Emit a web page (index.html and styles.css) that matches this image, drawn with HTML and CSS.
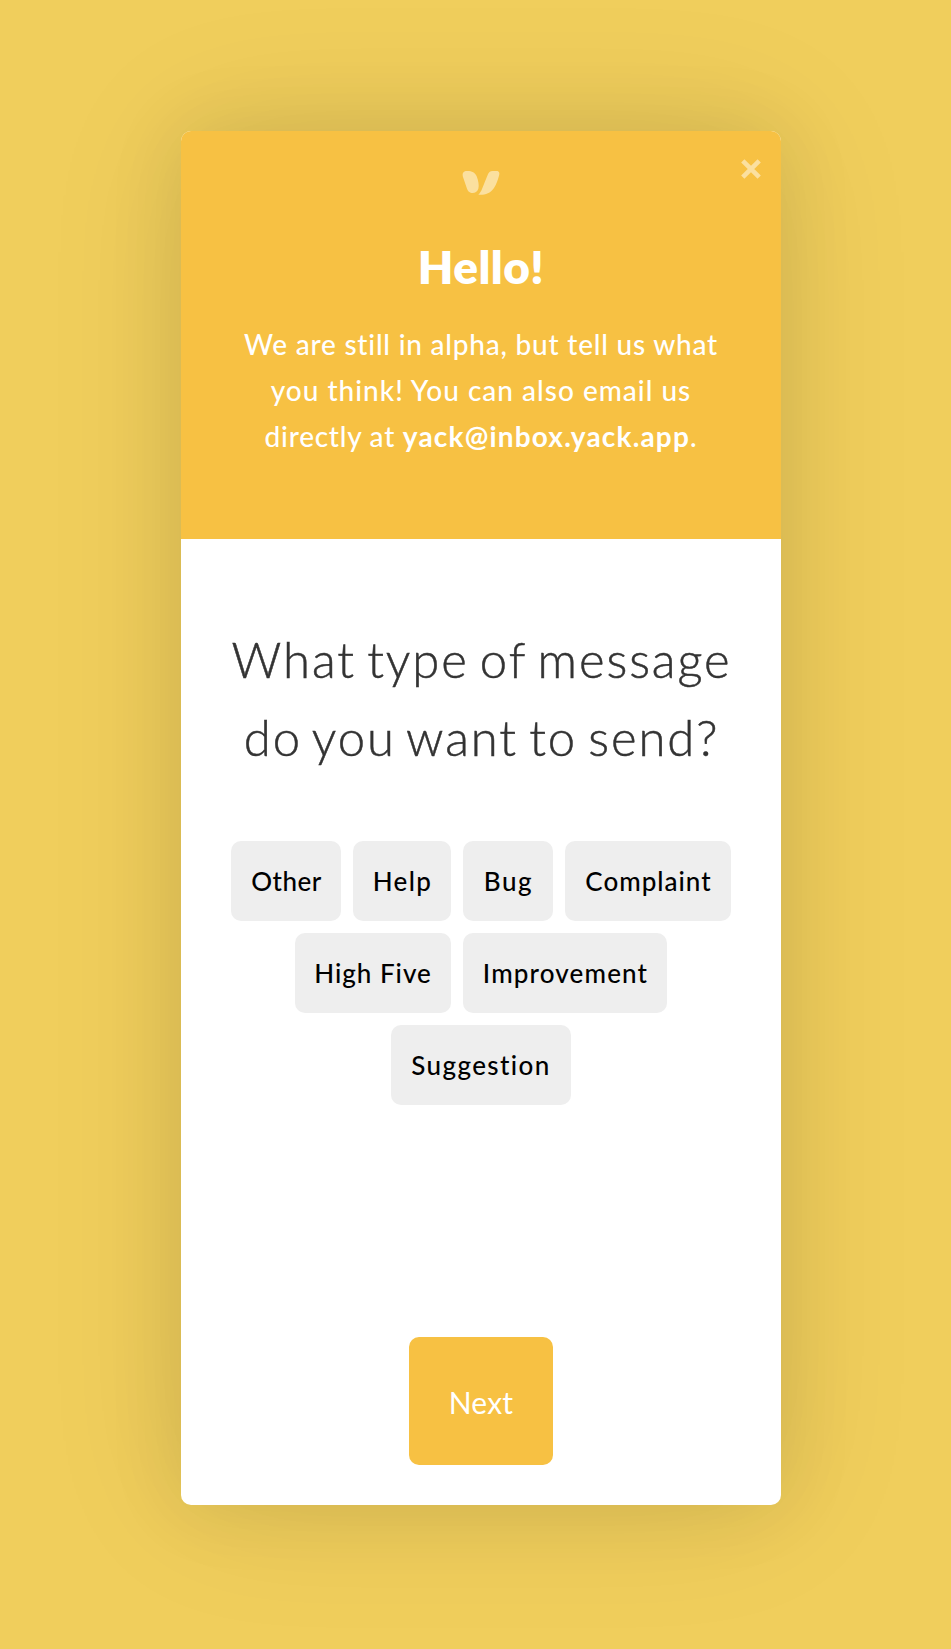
FILE: index.html
```html
<!DOCTYPE html>
<html lang="en">
<head>
<meta charset="utf-8">
<title>Feedback</title>
<link rel="stylesheet" href="styles.css">
</head>
<body>
<main class="card">
  <header class="card-header">
    <button class="close" aria-label="Close">
      <svg width="20" height="20" viewBox="0 0 20 20"><path d="M1.8 1.8L18.2 18.2M18.2 1.8L1.8 18.2" stroke="#fbe09f" stroke-width="4.6"/></svg>
    </button>
    <svg class="logo" width="38" height="26" viewBox="36 30 114 78" fill="#fbe09f">
      <path d="M48 33C64 32 75 36 80 49C85 62 88 77 85 86C81 98 71 100 62 98C56 96 53 91 51 86L39 51C36 42 39 34 48 33Z"/>
      <path d="M85 104C90 99 93 94 96 87L112 47C116 37 120 33 128 33L139 33C147 33 150 39 147 47C143 60 140 72 132 84C120 101 105 105 85 104Z"/>
    </svg>
    <h1 class="hello">Hello!</h1>
    <p class="intro">
      <span class="line l1">We are still in alpha, but tell us what</span>
      <span class="line l2">you think! You can also email us</span>
      <span class="line l3">directly at <b class="email">yack@inbox.yack.app</b>.</span>
    </p>
  </header>
  <section class="card-body">
    <h2 class="question">
      <span class="line">What type of message</span>
      <span class="line">do you want to send?</span>
    </h2>
    <div class="chips">
      <button class="chip other">Other</button>
      <button class="chip help">Help</button>
      <button class="chip bug">Bug</button>
      <button class="chip complaint">Complaint</button>
      <button class="chip high-five">High Five</button>
      <button class="chip improvement">Improvement</button>
      <button class="chip suggestion">Suggestion</button>
    </div>
    <button class="next">Next</button>
  </section>
</main>
</body>
</html>
```
FILE: styles.css
```css
* { box-sizing: border-box; }
body {
  margin: 0;
  min-height: 1649px;
  padding: 131px 170px 144px 181px;
  background: #f0ce5c;
  font-family: Lato, "Open Sans", sans-serif;
}
button { border: 0; padding: 0; font: inherit; }
.card {
  display: flex;
  flex-direction: column;
  width: 600px;
  height: 1374px;
  border-radius: 10px;
  background: #fff;
  box-shadow: 0 0 80px rgba(0, 0, 0, .09), 0 0 150px rgba(0, 0, 0, .09);
}
.card-header {
  position: relative;
  display: flex;
  flex-direction: column;
  align-items: center;
  height: 408px;
  padding-top: 39px;
  border-radius: 10px 10px 0 0;
  background: #f7c143;
  color: #fff;
}
.close {
  position: absolute;
  top: 28px;
  right: 20px;
  width: 20px;
  height: 20px;
  background: none;
}
.close svg, .logo { display: block; }
.hello {
  margin: 41px 0 0;
  font-size: 46px;
  line-height: 60px;
  font-weight: 800;
  letter-spacing: .4px;
}
.intro {
  margin: 24px 0 0;
  font-size: 28px;
  line-height: 46px;
  font-weight: 500;
  text-align: center;
}
.line { display: block; white-space: nowrap; }
.l1 { letter-spacing: .78px; }
.l2 { letter-spacing: 1px; }
.l3 { letter-spacing: .75px; }
.email { letter-spacing: 1.17px; }
.card-body {
  flex: 1;
  display: flex;
  flex-direction: column;
  align-items: center;
  padding-bottom: 40px;
}
.question {
  margin: 81px 0 0;
  padding-left: 1px;
  font-size: 49px;
  line-height: 78px;
  font-weight: 300;
  letter-spacing: 1.9px;
  word-spacing: -4px;
  text-align: center;
  color: #333;
  -webkit-text-stroke: .5px #333;
}
.chips {
  display: flex;
  flex-wrap: wrap;
  justify-content: center;
  gap: 12px;
  width: 500px;
  margin-top: 65px;
}
.chip {
  height: 80px;
  padding-left: 1px;
  border-radius: 10px;
  background: #eee;
  color: #000;
  font-size: 26px;
  font-weight: 500;
  letter-spacing: 1px;
}
.other { width: 110px; letter-spacing: .5px; }
.help { width: 98px; letter-spacing: 1.4px; }
.bug { width: 90px; letter-spacing: 1.6px; }
.complaint { width: 166px; }
.high-five { width: 156px; padding-left: 0; }
.improvement { width: 204px; letter-spacing: 1.15px; }
.suggestion { width: 180px; padding-left: 0; letter-spacing: 1.4px; }
.next {
  width: 144px;
  height: 128px;
  margin-top: auto;
  padding-top: 1px;
  border-radius: 10px;
  background: #f7c143;
  color: #fff;
  font-size: 30px;
  letter-spacing: .2px;
}
```
